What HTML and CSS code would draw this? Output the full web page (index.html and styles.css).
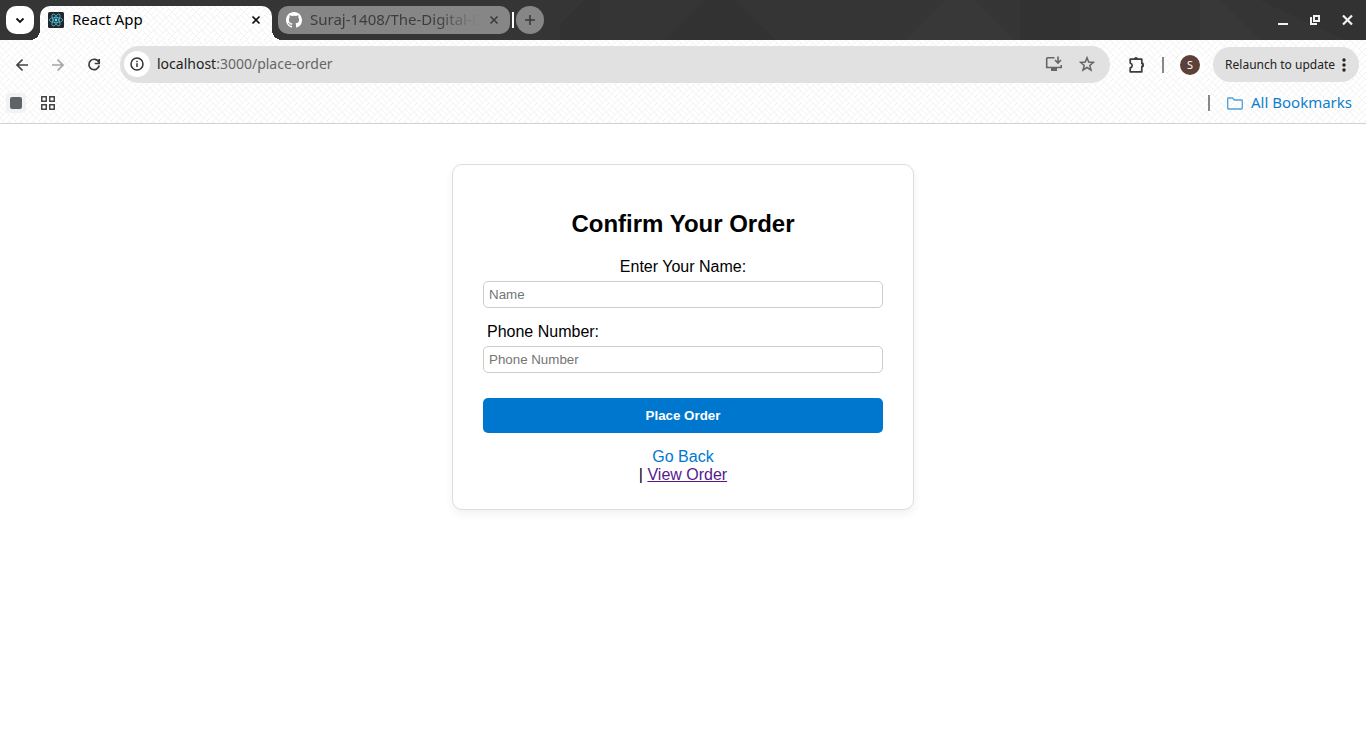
FILE: index.html
```html
<!DOCTYPE html>
<html lang="en">
<head>
<meta charset="utf-8">
<title>React App</title>
<link rel="stylesheet" href="styles.css">
</head>
<body>
<header class="browser">
  <div class="tabstrip">
    <svg class="facets" viewBox="0 0 1366 40" preserveAspectRatio="none" aria-hidden="true">
      <path fill="#323232" d="M560 24 584 0h16v40h-40zM665 40 705 0h30l40 40zM1020 0h60v40h-60zM1260 0h106v40h-20z"/>
      <path fill="#383838" d="M905 40 945 0h30l40 40zM1200 0h20l40 40h-60z"/>
    </svg>
    <button class="tab-search" aria-label="Search tabs"><svg width="12" height="12" viewBox="0 0 12 12"><path d="m2.500 4.500 3.500 3.500 3.500-3.500" fill="none" stroke="#111" stroke-width="1.800"/></svg></button>
    <div class="tab tab-active">
      <svg class="favicon" width="16" height="16" viewBox="0 0 16 16"><rect width="16" height="16" rx="1.500" fill="#20262c"/><g fill="none" stroke="#53b9d4" stroke-width=".8"><ellipse cx="8" cy="8" rx="6.700" ry="2.600"/><ellipse cx="8" cy="8" rx="6.700" ry="2.600" transform="rotate(60 8 8)"/><ellipse cx="8" cy="8" rx="6.700" ry="2.600" transform="rotate(120 8 8)"/></g><circle cx="8" cy="8" r="1.400" fill="#61dafb"/></svg>
      <span class="tab-title">React App</span>
      <button class="icon-btn" aria-label="Close tab"><svg width="16" height="16" viewBox="0 0 16 16"><path d="m4.500 4.500 7 7m0-7-7 7" stroke="#111" stroke-width="1.700"/></svg></button>
    </div>
    <div class="tab tab-idle">
      <svg class="favicon" width="16" height="16" viewBox="0 0 16 16"><path fill="#fff" d="M8 0C3.580 0 0 3.580 0 8c0 3.540 2.290 6.530 5.470 7.590.4.070.55-.17.55-.38 0-.19-.01-.82-.01-1.490-2.010.37-2.530-.49-2.690-.94-.09-.23-.48-.94-.82-1.130-.28-.15-.68-.52-.01-.53.63-.01 1.080.58 1.230.82.72 1.210 1.870.87 2.330.66.070-.52.28-.87.51-1.070-1.780-.2-3.640-.89-3.640-3.950 0-.87.31-1.590.82-2.150-.08-.2-.36-1.020.08-2.120 0 0 .67-.21 2.200.82.64-.18 1.320-.27 2-.27s1.360.09 2 .27c1.530-1.040 2.200-.82 2.200-.82.44 1.100.16 1.920.08 2.120.51.56.82 1.270.82 2.150 0 3.070-1.870 3.750-3.650 3.950.29.25.54.73.54 1.480 0 1.070-.01 1.930-.01 2.200 0 .21.15.46.55.38A8.010 8.010 0 0 0 16 8c0-4.420-3.580-8-8-8"/></svg>
      <span class="tab-title fade">Suraj-1408/The-Digital-E</span>
      <button class="icon-btn" aria-label="Close tab"><svg width="16" height="16" viewBox="0 0 16 16"><path d="m4.500 4.500 7 7m0-7-7 7" stroke="#3a3a3a" stroke-width="1.500"/></svg></button>
    </div>
    <span class="tab-divider"></span>
    <button class="new-tab" aria-label="New tab"><svg width="14" height="14" viewBox="0 0 14 14"><path d="M7 2v10M2 7h10" stroke="#3a3a3a" stroke-width="1.600"/></svg></button>
    <div class="window-controls">
      <button class="icon-btn" aria-label="Minimize"><svg width="16" height="16" viewBox="0 0 16 16"><path d="M3 11h10v2H3z" fill="#f2f2f2"/></svg></button>
      <button class="icon-btn" aria-label="Restore"><svg width="16" height="16" viewBox="0 0 16 16"><path d="M7 4h5v5H7zM4 5v7h6" fill="none" stroke="#f2f2f2" stroke-width="2"/></svg></button>
      <button class="icon-btn" aria-label="Close window"><svg width="16" height="16" viewBox="0 0 16 16"><path d="m4 3.500 9 9m0-9-9 9" stroke="#f2f2f2" stroke-width="2.200"/></svg></button>
    </div>
  </div>
  <div class="chrome">
    <div class="toolbar">
      <nav class="history">
        <button class="icon-btn" aria-label="Back"><svg width="16" height="16" viewBox="0 0 16 16"><path d="M14 8H3m5.500-5.500L3 8l5.500 5.500" fill="none" stroke="#444" stroke-width="1.700"/></svg></button>
        <button class="icon-btn" aria-label="Forward"><svg width="16" height="16" viewBox="0 0 16 16"><path d="M2 8h11M7.500 2.500 13 8l-5.500 5.500" fill="none" stroke="#a5a5a5" stroke-width="1.700"/></svg></button>
        <button class="icon-btn" aria-label="Reload"><svg width="16" height="16" viewBox="0 0 16 16"><path d="M12.800 5.200A5.200 5.200 0 1 0 13.200 8.500M13.200 2v4.500H8.700" fill="none" stroke="#3c3c3c" stroke-width="1.700"/></svg></button>
      </nav>
      <div class="omnibox">
        <button class="site-info" aria-label="Site information"><svg width="16" height="16" viewBox="0 0 16 16"><circle cx="8" cy="8" r="6" fill="none" stroke="#333" stroke-width="1.500"/><path d="M8 7.300V11M8 4.700v1.500" stroke="#333" stroke-width="1.500"/></svg></button>
        <span class="url"><b>localhost</b>:3000/place-order</span>
        <button class="icon-btn" aria-label="Install app"><svg width="18" height="18" viewBox="0 0 18 18"><path d="M9.500 2.700H2.500q-.8 0-.8.800v9h14.500V10M13 1.500v6M10 5l3 3 3-3" fill="none" stroke="#666" stroke-width="1.600"/><path d="M6 13h6v3H6z" fill="#666"/></svg></button>
        <button class="icon-btn" aria-label="Bookmark this page"><svg width="16" height="16" viewBox="0 0 16 16"><path d="m8 1.700 1.700 4.300 4.700.4-3.600 3 1.200 4.600L8 11.500 4 14l1.200-4.600-3.600-3 4.700-.4z" fill="none" stroke="#666" stroke-width="1.500"/></svg></button>
      </div>
      <div class="actions">
        <button class="icon-btn" aria-label="Extensions"><svg width="18" height="18" viewBox="0 0 18 18"><path d="M2.200 3.200h11.600v4.200h1v3h-1v5.400H2.200v-3.900q2-.5 2-2.400t-2-2.400z" fill="none" stroke="#3c3c3c" stroke-width="1.700" stroke-linejoin="round"/><path d="M6 3a2 2 0 0 1 4 0zM14 7a2 2 0 0 1 0 4z" fill="#3c3c3c"/></svg></button>
        <span class="bar-divider"></span>
        <button class="avatar" aria-label="Profile">S</button>
        <button class="relaunch">Relaunch to update<svg width="4" height="16" viewBox="0 0 4 16" fill="#222"><circle cx="2" cy="3" r="1.700"/><circle cx="2" cy="8" r="1.700"/><circle cx="2" cy="13" r="1.700"/></svg></button>
      </div>
    </div>
    <div class="bookmarks">
      <button class="stop-chip" aria-label="Tab group"><span class="chip-dot"></span></button>
      <button class="icon-btn" aria-label="Apps"><svg width="16" height="16" viewBox="0 0 16 16" fill="none" stroke="#454545" stroke-width="1.500"><path d="M1.750 1.750h4.500v4.500h-4.500zM9.750 1.750h4.500v4.500h-4.500zM1.750 9.750h4.500v4.500h-4.500zM9.750 9.750h4.500v4.500h-4.500z"/></svg></button>
      <span class="bar-divider push"></span>
      <button class="all-bookmarks"><svg width="18" height="16" viewBox="0 0 18 16"><path d="M1.700 13.200v-9.400q0-.8.800-.8h4l1.800 2h7.200q.8 0 .8.800v7.400q0 .8-.8.800h-13q-.8 0-.8-.8z" fill="none" stroke="#4aa3d8" stroke-width="1.300"/></svg><span class="lifted">All Bookmarks</span></button>
    </div>
  </div>
</header>
<main class="page">
  <form class="order-card">
    <h2>Confirm Your Order</h2>
    <label for="name">Enter Your Name:</label>
    <input id="name" type="text" placeholder="Name">
    <label class="label-start" for="phone">Phone Number:</label>
    <input id="phone" type="tel" placeholder="Phone Number">
    <button class="submit" type="submit">Place Order</button>
    <div class="links"><a class="go-back" href="#back">Go Back</a><span>| <a class="view-order" href="#order">View Order</a></span></div>
  </form>
</main>
</body>
</html>
```
FILE: styles.css
```css
* { box-sizing: border-box; }
body { margin: 0; background: #fff; color: #000; font-family: "Liberation Sans", Arial, sans-serif; }
button { border: 0; padding: 0; background: none; font-family: inherit; color: inherit; }
svg { display: block; flex: none; }

.browser {
  --weave: url("data:image/svg+xml,%3Csvg xmlns='http://www.w3.org/2000/svg' width='12' height='12'%3E%3Cpath d='M0 6 6 0M3 9l6-6M6 12l6-6M6 0l6 6M0 6l6 6M0 0l3 3M9 9l3 3' fill='none' stroke='%23f3f3f3'/%3E%3C/svg%3E");
  font-family: "Noto Sans", sans-serif;
  font-size: 15px;
}
.icon-btn { display: flex; align-items: center; justify-content: center; flex: none; }

.tabstrip { position: relative; z-index: 1; display: flex; align-items: center; height: 40px; padding-left: 6px; background: #353535; }
.tabstrip > * { position: relative; }
.tabstrip > .facets { position: absolute; inset: 0; width: 100%; height: 100%; }
.tab-search { display: flex; align-items: center; justify-content: center; width: 28px; height: 28px; margin-right: 6px; border-radius: 10px; background: #fff; }
.tab { display: flex; align-items: center; gap: 8px; width: 232px; padding: 0 8px; }
.tab-active { align-self: flex-end; height: 34px; padding-bottom: 6px; border-radius: 10px 10px 0 0; background: #fff var(--weave); }
.tab-active::before, .tab-active::after { content: ""; position: absolute; bottom: 0; width: 10px; height: 10px; }
.tab-active::before { right: 100%; background: radial-gradient(circle at 0 0, transparent 10px, #fff 10px); }
.tab-active::after { left: 100%; background: radial-gradient(circle at 100% 0, transparent 10px, #fff 10px); }
.tab-idle { height: 28px; margin: 0 2px 0 6px; border-radius: 10px; background: #868686; color: #3d3d3d; }
.tab-title { flex: 1; min-width: 0; padding-bottom: 2px; overflow: hidden; white-space: nowrap; line-height: 20px; }
.fade { mask-image: linear-gradient(to right, #000 75%, transparent); }
.tab-divider { width: 2px; height: 16px; margin-right: 2px; background: #fff; }
.new-tab { display: flex; align-items: center; justify-content: center; width: 28px; height: 28px; border-radius: 50%; background: #868686; }
.window-controls { display: flex; gap: 16px; margin-left: auto; padding-right: 11px; }

.chrome { border-bottom: 1px solid #d2d2d2; background: #fff var(--weave); }
.toolbar { display: flex; align-items: center; height: 46px; padding: 3px 7px 0 14px; }
.history { display: flex; gap: 20px; margin-right: 18px; }
.omnibox { display: flex; align-items: center; flex: 1; min-width: 0; height: 37px; padding: 0 15px 1px 4px; gap: 16px; border-radius: 19px; background: #e1e1e1; }
.site-info { display: flex; align-items: center; justify-content: center; width: 26px; height: 26px; margin-right: -9px; border-radius: 50%; background: #fff; }
.url { flex: 1; min-width: 0; overflow: hidden; white-space: nowrap; font-size: 14px; line-height: 20px; color: #666; }
.url b { font-weight: 400; color: #222; }
.actions { display: flex; align-items: center; margin-left: 18px; }
.bar-divider { width: 2px; height: 16px; background: #888; }
.actions .bar-divider { margin: 0 12px 0 16px; }
.avatar { width: 28px; height: 28px; margin-right: 9px; border: 4px solid #fff; border-radius: 50%; background: #5d4037; color: #fff; font-size: 11px; line-height: 20px; }
.relaunch { display: flex; align-items: center; gap: 7px; height: 35px; padding: 0 13px 0 12px; border-radius: 18px; background: #e1e1e1; color: #222; font-size: 12px; white-space: nowrap; }
.bookmarks { display: flex; align-items: center; height: 37px; padding: 0 14px 3px 6px; }
.stop-chip { display: flex; align-items: center; justify-content: center; width: 20px; height: 20px; margin-right: 14px; border-radius: 4px; background: #f1f2f4; }
.chip-dot { width: 12px; height: 12px; border-radius: 2px; background: #5f6368; }
.push { margin: 0 16px 0 auto; }
.all-bookmarks { display: flex; align-items: center; gap: 7px; color: #0d7fc9; font-size: 15px; line-height: 20px; }
.lifted { padding-bottom: 2px; }

.page { display: flex; justify-content: center; padding: 40px 16px; }
.order-card { display: flex; flex-direction: column; width: 100%; max-width: 462px; padding: 25px 30px; border: 1px solid #ddd; border-radius: 10px; background: #fff; box-shadow: 0 4px 10px rgba(0, 0, 0, .06); text-align: center; font-size: 16px; line-height: 18px; }
.order-card h2 { margin: 20px 0; font-size: 24px; line-height: 28px; }
.order-card label { margin-bottom: 5px; }
.order-card .label-start { padding-left: 4px; text-align: left; }
.order-card input { height: 27px; margin: 0 0 15px; padding: 5px; border: 1px solid #ccc; border-radius: 5px; background: #fff; font-family: inherit; }
.order-card input::placeholder { color: #757575; }
.submit { height: 35px; margin: 10px 0 15px; border-radius: 5px; background: #0077cf; color: #fff; font-weight: 700; }
.links { display: flex; flex-direction: column; align-items: center; }
.go-back { color: #0078d0; text-decoration: none; }
.view-order { color: #551a8b; }
```
